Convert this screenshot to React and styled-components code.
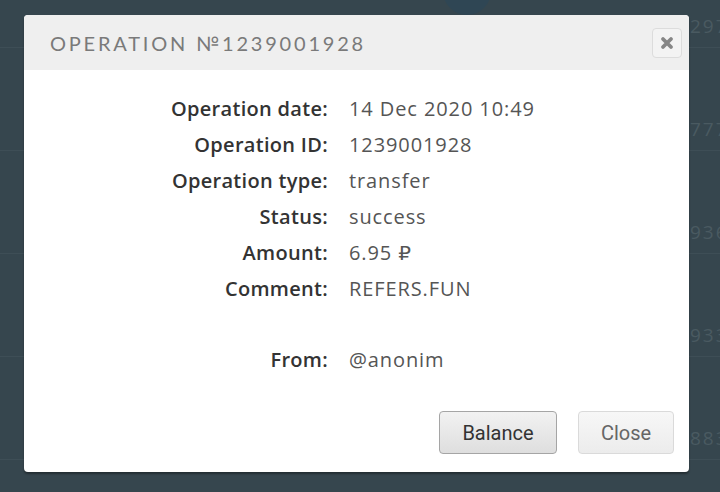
import styled, { createGlobalStyle } from "styled-components";

const rows = [
  ["Operation date:", "14 Dec 2020 10:49"],
  ["Operation ID:", "1239001928"],
  ["Operation type:", "transfer"],
  ["Status:", "success"],
  ["Amount:", "6.95 ₽"],
  ["Comment:", "REFERS.FUN"],
];

const backItems = ["2978104", "7774410", "9360032", "9331871", "8835519"];

const App = () => {
  return (
    <>
      <Global />
      <Page>
        <BackList>
          {backItems.map((n) => (
            <BackRow key={n}>
              <Avatar />
              <BackNum>{n}</BackNum>
            </BackRow>
          ))}
        </BackList>

        <Modal>
          <Header>
            <Title>Operation №1239001928</Title>
            <XButton aria-label="close">
              <svg width="14" height="14" viewBox="0 0 14 14">
                <path
                  d="M3 3 L11 11 M11 3 L3 11"
                  stroke="#868686"
                  strokeWidth="3.8"
                  strokeLinecap="round"
                />
              </svg>
            </XButton>
          </Header>

          <Body>
            {rows.map(([label, value]) => (
              <Row key={label}>
                <Label>{label}</Label>
                <Value>{value}</Value>
              </Row>
            ))}
            <Spacer />
            <Row>
              <Label>From:</Label>
              <Value>@anonim</Value>
            </Row>
          </Body>

          <Footer>
            <Button $primary>Balance</Button>
            <Button>Close</Button>
          </Footer>
        </Modal>
      </Page>
    </>
  );
};

export default App;

//global
const Global = createGlobalStyle`
  html, body {
    margin: 0;
    padding: 0;
    background: #36464e;
  }
`;

//page
const Page = styled.div`
  position: relative;
  width: 720px;
  height: 492px;
  overflow: hidden;
  background: #36464e;
  font-family: "Open Sans", "DejaVu Sans", sans-serif;
`;

//faint list behind the modal
const BackList = styled.div`
  display: flex;
  flex-direction: column;
  margin-top: -55px;
`;

const BackRow = styled.div`
  display: flex;
  align-items: flex-start;
  height: 103px;
  box-sizing: border-box;
  border-bottom: 1px solid #3e4e56;
  white-space: nowrap;
  overflow: hidden;
`;

const Avatar = styled.div`
  flex: none;
  width: 48px;
  height: 48px;
  margin: 22px 0 0 443px;
  border-radius: 50%;
  background: #2f4654;
`;

const BackNum = styled.span`
  margin: 68px 0 0 199px;
  font-family: "Open Sans", sans-serif;
  font-size: 19px;
  letter-spacing: 2px;
  color: #4a5a61;
`;

//modal
const Modal = styled.div`
  position: absolute;
  left: 24px;
  top: 15px;
  width: 665px;
  height: 457px;
  display: flex;
  flex-direction: column;
  background: #fff;
  border-radius: 4px;
  overflow: hidden;
  box-shadow: 0 2px 2px rgba(0, 0, 0, 0.35);
`;

const Header = styled.div`
  height: 55px;
  flex: none;
  display: flex;
  align-items: center;
  justify-content: space-between;
  padding: 0 7px 0 26px;
  background: #efefef;
`;

const Title = styled.h2`
  margin: 0;
  font-family: "Lato", sans-serif;
  font-weight: 400;
  font-size: 20px;
  letter-spacing: 2.8px;
  text-transform: uppercase;
  color: #7a7a7a;
`;

const XButton = styled.button`
  width: 30px;
  height: 30px;
  display: flex;
  align-items: center;
  justify-content: center;
  padding: 0;
  margin-top: 1px;
  background: #f3f3f3;
  border: 1px solid #dcdcdc;
  border-radius: 4px;
`;

const Body = styled.div`
  display: grid;
  grid-template-columns: 304px 1fr;
  column-gap: 21px;
  padding-top: 21px;
`;

const Row = styled.div`
  display: contents;
`;

const Label = styled.div`
  text-align: right;
  line-height: 36px;
  font-size: 20px;
  font-weight: 600;
  letter-spacing: 0.3px;
  color: #333;
`;

const Value = styled.div`
  line-height: 36px;
  font-size: 20px;
  font-weight: 400;
  letter-spacing: 0.9px;
  color: #555;
`;

const Spacer = styled.div`
  grid-column: 1 / -1;
  height: 35px;
`;

const Footer = styled.div`
  display: flex;
  justify-content: flex-end;
  gap: 21px;
  padding: 33px 15px 0 0;
`;

const Button = styled.button`
  width: ${(props) => (props.$primary ? "118px" : "96px")};
  height: 43px;
  padding: 0;
  font-family: "Roboto", sans-serif;
  font-size: 20px;
  color: ${(props) => (props.$primary ? "#333" : "#666")};
  background: ${(props) =>
    props.$primary
      ? "linear-gradient(#f2f2f2, #dedede)"
      : "linear-gradient(#f7f7f7, #ececec)"};
  border: 1px solid ${(props) => (props.$primary ? "#a5a5a5" : "#dadada")};
  border-radius: 4px;
`;
